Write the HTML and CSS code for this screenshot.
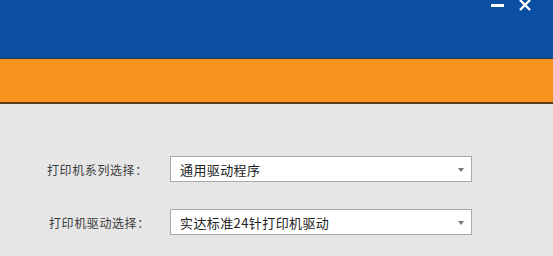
FILE: index.html
```html
<!DOCTYPE html>
<html lang="zh-CN">
<head>
  <meta charset="UTF-8">
  <title>打印机驱动安装</title>
  <link rel="stylesheet" href="styles.css">
</head>
<body>
  <!-- Barra de título azul -->
  <div class="titlebar">
    <div class="controls">
      <span class="btn-min"></span>
      <svg class="btn-close" width="12" height="12" viewBox="0 0 12 12">
        <path d="M1 1 L11 11 M11 1 L1 11" stroke="#fff" stroke-width="2.4" fill="none"/>
      </svg>
    </div>
  </div>

  <!-- Franja naranja -->
  <div class="band"></div>

  <!-- Formulario -->
  <div class="form">
    <div class="row">
      <label class="lbl">打印机系列选择：</label>
      <div class="select">
        <span>通用驱动程序</span>
        <span class="arrow"></span>
      </div>
    </div>
    <div class="row second">
      <label class="lbl">打印机驱动选择：</label>
      <div class="select">
        <span>实达标准24针打印机驱动</span>
        <span class="arrow"></span>
      </div>
    </div>
  </div>
</body>
</html>
```

FILE: styles.css
```css
body {
  margin: 0;
  width: 553px;
  height: 256px;
  overflow: hidden;
  background-color: #e6e6e6;
  font-family: "Noto Sans CJK SC", "Liberation Sans", sans-serif;
}

/* barra superior */
.titlebar {
  height: 58px;
  background-color: #0a4fa1;
  border-bottom: 1px solid #2a3550;
  display: flex;
  justify-content: flex-end;
  align-items: flex-start;
}

.controls {
  display: flex;
  align-items: center;
  gap: 15px;
  margin-top: -1px;
  margin-right: 22px;
}

.btn-min {
  width: 13px;
  height: 3px;
  background: #fff;
  margin-top: 1px;
}

/* franja naranja */
.band {
  height: 43px;
  background-color: #f7941f;
  border-bottom: 2px solid #5b3b1c;
}

.form {
  padding-top: 52px;
}

.row {
  display: flex;
  align-items: center;
  height: 26px;
}

.row.second {
  margin-top: 27px;
}

.lbl {
  width: 123px;
  padding-left: 47px;
  font-size: 12px;
  letter-spacing: 0.6px;
  color: #3c3c3c;
}

.row.second .lbl {
  padding-left: 49px;
  width: 121px;
}

/* caja de selección */
.select {
  width: 302px;
  height: 26px;
  box-sizing: border-box;
  background: #fff;
  border: 1px solid #a9a9a9;
  display: flex;
  align-items: center;
  justify-content: space-between;
  padding: 0 7px 0 9px;
  font-size: 13px;
  letter-spacing: 0.4px;
  color: #222;
}

.arrow {
  width: 0;
  height: 0;
  border-left: 3px solid transparent;
  border-right: 3px solid transparent;
  border-top: 4px solid #777;
  margin-top: 2px;
}
```
